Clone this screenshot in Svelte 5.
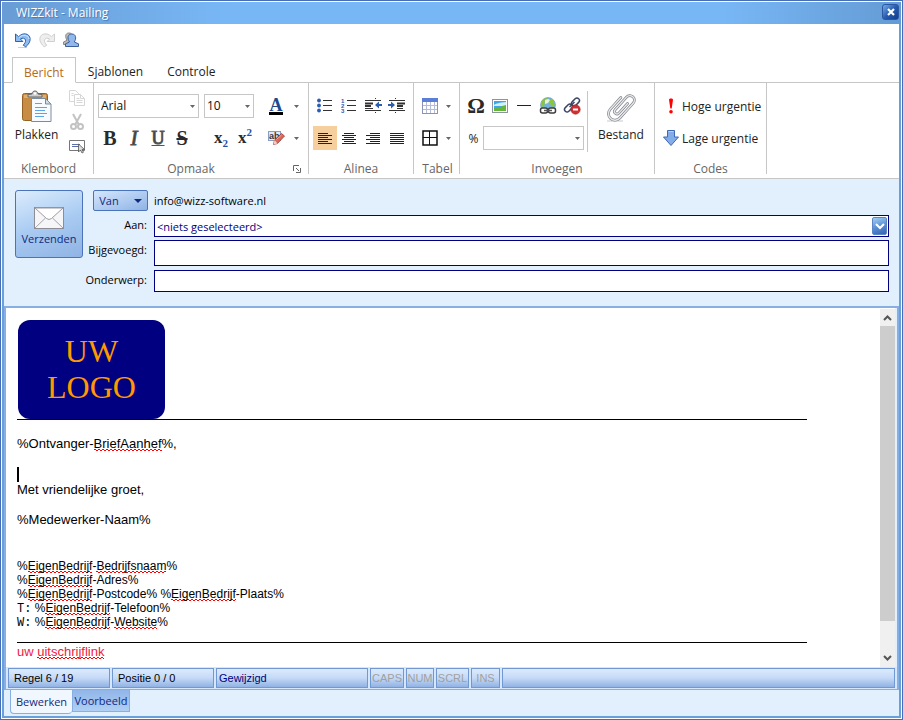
<script lang="ts">
	const fonts = ['Arial', 'Courier New', 'Tahoma', 'Times New Roman'];
	const sizes = [8, 9, 10, 11, 12, 14];
	const alignments = ['left', 'center', 'right', 'justify'] as const;
	const barWidths = [14, 10, 14, 10, 14, 10, 14];

	let font = $state('Arial');
	let size = $state(10);
	let align = $state('left');
	let cc = $state('');
	let subject = $state('');

	function barX(kind: string, width: number) {
		if (kind === 'center') return 8 - width / 2;
		if (kind === 'right') return 15 - width;
		return 1;
	}
</script>

{#snippet caret()}
	<svg class="caret" width="5" height="3" viewBox="0 0 5 3" aria-hidden="true">
		<path d="M0 0h5L2.5 3z" fill="#666" />
	</svg>
{/snippet}

<div class="window">
	<header class="titlebar">
		<h1>WIZZkit - Mailing</h1>
		<button class="close" aria-label="Sluiten">
			<svg width="8" height="8" viewBox="0 0 8 8"><path d="M1 1l6 6M7 1L1 7" stroke="#fff" stroke-width="2.2" /></svg>
		</button>
	</header>

	<div class="quick">
		<button class="tool" aria-label="Ongedaan maken">
			<svg width="18" height="18" viewBox="0 0 18 18">
				<path d="M4 16.5h9" stroke="#bbb" opacity=".7" />
				<path d="M1.5 3v7.5h7.4L6.4 8c2-1.4 4.6-1 5.1 1 .4 1.7-.7 3.5-2.3 5.2l2.6 1.6c3-2.5 4.7-5.5 4.3-8.5C15.5 2.5 9 1 4.6 5.7z" fill="#8fbdf2" stroke="#2c62ae" stroke-linejoin="round" />
				<path d="M5 6.7c4-4.3 9.8-2.4 10 1.3" fill="none" stroke="#d5e8fc" />
			</svg>
		</button>
		<button class="tool" aria-label="Opnieuw" disabled>
			<svg width="18" height="18" viewBox="0 0 18 18">
				<path d="M16.5 3v7.5H9.1L11.6 8c-2-1.4-4.6-1-5.1 1-.4 1.7.7 3.5 2.3 5.2l-2.6 1.6c-3-2.5-4.7-5.5-4.3-8.5C2.5 2.5 9 1 13.4 5.7z" fill="#eee" stroke="#d0d0d0" stroke-linejoin="round" />
			</svg>
		</button>
		<button class="tool" aria-label="Contacten">
			<svg width="18" height="18" viewBox="0 0 18 18">
				<path d="M1.5 13.5V11L5 9.3C3 6 3 2 7 2s4 4 2.5 7l1 4.5z" fill="#bbb" stroke="#888" />
				<path d="M3.5 15.5v-2.7l4-1.8C5 7.5 5.5 3 9.8 3s4.8 4.5 2.5 8l4.2 1.8v2.7z" fill="#91b8ec" stroke="#3e5f98" stroke-linejoin="round" />
			</svg>
		</button>
	</div>

	<nav class="tabs" aria-label="Lint">
		<button class="tab active">Bericht</button>
		<button class="tab">Sjablonen</button>
		<button class="tab">Controle</button>
	</nav>

	<div class="ribbon">
		<section class="group clipboard">
			<div class="group-body">
				<button class="big">
					<svg width="32" height="34" viewBox="0 0 32 34">
						<rect x="1.5" y="3.5" width="25" height="27" rx="2" fill="#c88d45" stroke="#966126" />
						<path d="M3 5h22v3H3z" fill="#dfad6d" />
						<path d="M7 7V4.5l4-.5c0-4 6-4 6 0l4 .5V7z" fill="#ccc" stroke="#666" />
						<circle cx="14" cy="3.5" r="1.2" fill="#fff" />
						<path d="M10.5 8.5h14l5.5 5.5v17.5H10.5z" fill="#f7fbff" stroke="#7c8b9c" />
						<path d="M24.5 8.5V14H30z" fill="#cfdbe7" stroke="#7c8b9c" />
						<path d="M14 13.5h7M14 17.5h12M14 20.5h10M14 23.5h12M14 26.5h9" stroke="#5ba5e6" />
					</svg>
					Plakken
				</button>
				<div class="stack">
					<button class="tool" aria-label="Kopiëren" disabled>
						<svg width="18" height="18" viewBox="0 0 18 18" fill="#fff" stroke="#d6d6d6">
							<path d="M1.5 1.5h6l3 3v8h-9z" />
							<path d="M6.5 5.5h6l4 4v7h-10zM12.5 5.5v4h4M8.5 9.5h3M8.5 11.5h6M8.5 13.5h6M3.5 4.5h2M3.5 6.5h2" />
						</svg>
					</button>
					<button class="tool" aria-label="Knippen" disabled>
						<svg width="18" height="18" viewBox="0 0 18 18" fill="none" stroke="#c3c3c3" stroke-width="2">
							<path d="M5 1l6 11M13 1L7 12" />
							<circle cx="5.5" cy="13.5" r="2.5" />
							<circle cx="12.5" cy="13.5" r="2.5" />
						</svg>
					</button>
					<button class="tool" aria-label="Alles selecteren">
						<svg width="18" height="18" viewBox="0 0 18 18">
							<path d="M1.5 3.5h15v10h-15z" fill="#fff" stroke="#777" />
							<path d="M4 7.5h8M4 9.5h7" stroke="#5b6ea8" />
							<path d="M10.5 7v8l2-2 1.5 3 1.5-.8-1.5-2.7h2.5z" fill="#ddd" stroke="#555" stroke-width=".8" />
						</svg>
					</button>
				</div>
			</div>
			<h2>Klembord</h2>
		</section>

		<section class="group font">
			<div class="group-body">
				<div class="rows">
					<div class="row combos">
						<div class="combo family">
							<select aria-label="Lettertype" bind:value={font}>
								{#each fonts as name (name)}<option>{name}</option>{/each}
							</select>
							{@render caret()}
						</div>
						<div class="combo size">
							<select aria-label="Tekengrootte" bind:value={size}>
								{#each sizes as n (n)}<option value={n}>{n}</option>{/each}
							</select>
							{@render caret()}
						</div>
					</div>
					<div class="row">
						<button class="tool glyph" aria-label="Vet"><b>B</b></button>
						<button class="tool glyph italic" aria-label="Cursief"><i>I</i></button>
						<button class="tool glyph underline" aria-label="Onderstrepen"><u>U</u></button>
						<button class="tool glyph strike" aria-label="Doorhalen"><s>S</s></button>
						<button class="tool glyph script" aria-label="Subscript"><span>x<sub>2</sub></span></button>
						<button class="tool glyph script" aria-label="Superscript"><span>x<sup>2</sup></span></button>
					</div>
				</div>
				<span class="divider"></span>
				<div class="rows">
					<div class="row">
						<button class="tool color" aria-label="Tekstkleur">A</button>
						<button class="drop" aria-label="Meer kleuren">{@render caret()}</button>
					</div>
					<div class="row">
						<button class="tool" aria-label="Markeren">
							<svg width="18" height="18" viewBox="0 0 18 18">
								<rect x="1.5" y="2.5" width="12" height="9" fill="#e3ebf9" stroke="#8b9dc6" />
								<text x="2" y="10" font-family="Liberation Sans, sans-serif" font-size="9" font-weight="bold" fill="#334">ab</text>
								<path d="M7.5 11l7-6.500 3 2.500-7 7.500-4 1z" fill="#d9685a" stroke="#9c3a30" stroke-width=".8" />
								<path d="M7.5 11l3 3.500-4 1z" fill="#f3cfc9" />
								<path d="M9.5 10.5l5-4.5" stroke="#f0a69c" />
							</svg>
						</button>
						<button class="drop" aria-label="Meer markeringen">{@render caret()}</button>
					</div>
				</div>
			</div>
			<footer class="launch">
				<h2>Opmaak</h2>
				<button aria-label="Opmaakvenster">
					<svg width="8" height="8" viewBox="0 0 8 8" fill="none" stroke="#666">
						<path d="M.5 6V.5H6M3 3l3 3M7.5 3v4.5H3" />
					</svg>
				</button>
			</footer>
		</section>

		<section class="group">
			<div class="group-body">
				<div class="rows">
					<div class="row">
						<button class="tool" aria-label="Opsomming">
							<svg width="16" height="16" viewBox="0 0 16 16">
								<path d="M6 2.5h9M6 7.5h9M6 12.5h9" stroke="#333" />
								<g fill="#2b5caf"><circle cx="2" cy="2.5" r="1.9" /><circle cx="2" cy="7.5" r="1.9" /><circle cx="2" cy="12.5" r="1.9" /></g>
							</svg>
						</button>
						<button class="tool" aria-label="Nummering">
							<svg width="16" height="16" viewBox="0 0 16 16">
								<path d="M6 2.5h9M6 7.5h9M6 12.5h9" stroke="#333" />
								<g font-family="Liberation Sans, sans-serif" font-size="6" font-weight="bold" fill="#2b5caf">
									<text x="0" y="5">1</text><text x="0" y="10">2</text><text x="0" y="15">3</text>
								</g>
							</svg>
						</button>
						<button class="tool" aria-label="Inspringing verkleinen">
							<svg width="18" height="16" viewBox="0 0 18 16">
								<path d="M1 2.5h16M1 10.5h8M1 12.5h16" stroke="#333" />
								<path d="M1 5.5h8M1 8h6" stroke="#333" stroke-width="2" />
								<path d="M11.5 0v3M11.5 12v4" stroke="#333" stroke-dasharray="1 1" />
								<path d="M11 7l4-3.5V6h3v2h-3v2.5z" fill="#2b5caf" />
							</svg>
						</button>
						<button class="tool" aria-label="Inspringing vergroten">
							<svg width="18" height="16" viewBox="0 0 18 16">
								<path d="M1 2.5h16M9 10.5h6M1 12.5h16" stroke="#333" />
								<path d="M9 5.5h8M9 8h6" stroke="#333" stroke-width="2" />
								<path d="M7.5 0v3M7.5 12v4" stroke="#333" stroke-dasharray="1 1" />
								<path d="M7 7L3 3.5V6H0v2h3v2.5z" fill="#2b5caf" />
							</svg>
						</button>
					</div>
					<div class="row">
						{#each alignments as kind (kind)}
							<button class="tool" class:pressed={align === kind} aria-label="Uitlijnen: {kind}" onclick={() => (align = kind)}>
								<svg width="16" height="12" viewBox="0 0 16 12" shape-rendering="crispEdges">
									{#each barWidths as w, i (i)}
										{@const width = kind === 'justify' ? 14 : w}
										<rect x={barX(kind, width)} y={i * 2 - 1} {width} height="1" fill="#222" />
									{/each}
								</svg>
							</button>
						{/each}
					</div>
				</div>
			</div>
			<h2>Alinea</h2>
		</section>

		<section class="group table">
			<div class="group-body">
				<div class="rows">
					<div class="row">
						<button class="tool" aria-label="Tabel invoegen">
							<svg width="16" height="16" viewBox="0 0 16 16">
								<rect x=".5" y=".5" width="15" height="15" fill="#fff" stroke="#8b93b7" />
								<path d="M0 0h16v4H0z" fill="#5b7fd6" />
								<path d="M1 7.5h14M1 11.5h14M4.5 4v11M8.5 4v11M12.5 4v11" stroke="#b4bcda" />
							</svg>
						</button>
						<button class="drop" aria-label="Tabelopties">{@render caret()}</button>
					</div>
					<div class="row">
						<button class="tool" aria-label="Randen">
							<svg width="16" height="16" viewBox="0 0 16 16" fill="none" stroke="#111">
								<path d="M1 1h14v14H1z" stroke-width="1.5" /><path d="M7.5 1v14M1 7.5h14" />
							</svg>
						</button>
						<button class="drop" aria-label="Randopties">{@render caret()}</button>
					</div>
				</div>
			</div>
			<h2>Tabel</h2>
		</section>

		<section class="group insert">
			<div class="group-body">
				<div class="rows">
					<div class="row">
						<button class="tool omega" aria-label="Symbool">Ω</button>
						<button class="tool" aria-label="Afbeelding">
							<svg width="16" height="14" viewBox="0 0 16 14">
								<rect x=".5" y=".5" width="15" height="13" fill="#fff" stroke="#8a94a4" />
								<path d="M2 2h12v10H2z" fill="#3fa6e8" />
								<path d="M2 6c3-2 5-2 12-3v4H2z" fill="#d3effb" />
								<path d="M2 9c4 1 7-2 12-3v6H2z" fill="#64b53a" />
							</svg>
						</button>
						<button class="tool" aria-label="Horizontale lijn">
							<svg width="16" height="16" viewBox="0 0 16 16"><path d="M1 7.5h14" stroke="#222" /></svg>
						</button>
						<button class="tool" aria-label="Hyperlink">
							<svg width="18" height="18" viewBox="0 0 18 18">
								<circle cx="9" cy="8" r="7.5" fill="#75b3df" stroke="#6d94ae" stroke-width=".6" />
								<path d="M2 5C4 1.5 7 .7 8 1L7 4 5 6l1 3-4 1zM10 2l4 1 2 5-2 2-3-3-2-3z" fill="#8cc63c" />
								<path d="M6 3l3-1 2 1-2 3-3 1z" fill="#eaf4d5" />
								<g fill="#fff" stroke="#3c3c3c" stroke-width="1.5">
									<rect x="1.5" y="11" width="7" height="5" rx="2" /><rect x="9.5" y="11" width="7" height="5" rx="2" />
								</g>
								<path d="M5 13.5h8" stroke="#555" stroke-width="1.5" />
							</svg>
						</button>
						<button class="tool" aria-label="Hyperlink verwijderen">
							<svg width="18" height="18" viewBox="0 0 18 18">
								<g fill="none" stroke="#3b4664" stroke-width="1.5">
									<rect x="8" y="2.5" width="9" height="5" rx="2.5" transform="rotate(-45 12.5 5)" />
									<rect x="1" y="8.5" width="9" height="5" rx="2.5" transform="rotate(-45 5.5 11)" />
									<path d="M6.5 10l5-5" />
								</g>
								<circle cx="12.5" cy="12.5" r="4.7" fill="#cf3030" stroke="#a51c1c" stroke-width=".6" />
								<path d="M10 12.5h5" stroke="#fff" stroke-width="2" />
							</svg>
						</button>
					</div>
					<div class="row">
						<label class="percent" for="veld">%</label>
						<div class="combo field">
							<select id="veld"><option></option></select>
							{@render caret()}
						</div>
					</div>
				</div>
				<span class="divider"></span>
				<button class="big file">
					<svg width="34" height="34" viewBox="0 0 34 34" fill="none">
						<path d="M3 31h16" stroke="#e4e4e4" stroke-width="2" />
						<g transform="translate(17 17) rotate(42)" stroke-linecap="round">
							<path d="M2.5-7V6a2.5 2.5 0 0 1-5 0V-11a4.5 4.5 0 0 1 9 0V9a6.5 6.5 0 0 1-13 0V-7" stroke="#7f8389" stroke-width="2.8" />
							<path d="M2.5-7V6a2.5 2.5 0 0 1-5 0V-11a4.5 4.5 0 0 1 9 0V9a6.5 6.5 0 0 1-13 0V-7" stroke="#e6e8eb" stroke-width="1.4" />
						</g>
					</svg>
					Bestand
				</button>
			</div>
			<h2>Invoegen</h2>
		</section>

		<section class="group codes">
			<div class="group-body">
				<div class="rows">
					<button class="priority">
						<svg width="16" height="16" viewBox="0 0 16 16" fill="#f00">
							<path d="M6 1.5C6 0 10 0 10 1.5l-1.300 9H7.3z" /><circle cx="8" cy="13.7" r="1.8" />
						</svg>
						Hoge urgentie
					</button>
					<button class="priority">
						<svg width="16" height="16" viewBox="0 0 16 16">
							<path d="M4.5.5h7V7h4L8 15.5.5 7h4z" fill="#83ace8" stroke="#3d69b5" stroke-linejoin="round" />
							<path d="M5.5 1.5h5" stroke="#b9d2f5" />
						</svg>
						Lage urgentie
					</button>
				</div>
			</div>
			<h2>Codes</h2>
		</section>
	</div>

	<form class="address" onsubmit={(e) => e.preventDefault()}>
		<button class="send">
			<svg width="30" height="22" viewBox="0 0 30 22">
				<rect x=".5" y=".5" width="29" height="21" fill="#f6f6f8" stroke="#8d8d96" />
				<path d="M1 21l10.5-10M29 21L18.5 11" stroke="#a4a4ac" />
				<path d="M1 1l11.5 10.5q2.5 2 5 0L29 1z" fill="#fff" stroke="#9b9ba3" />
			</svg>
			Verzenden
		</button>
		<div class="fields">
			<button type="button" class="from">
				Van
				<svg width="8" height="4" viewBox="0 0 8 4"><path d="M0 0h8L4 4z" fill="#102a80" /></svg>
			</button>
			<span class="sender">info@wizz-software.nl</span>

			<label for="aan">Aan:</label>
			<div class="recipient">
				<select id="aan"><option>&lt;niets geselecteerd&gt;</option></select>
				<span class="pick" aria-hidden="true">
					<svg width="10" height="7" viewBox="0 0 10 7"><path d="M1 1l4 4 4-4" fill="none" stroke="#fff" stroke-width="2" /></svg>
				</span>
			</div>

			<label for="cc">Bijgevoegd:</label>
			<input id="cc" class="tall" bind:value={cc} />

			<label for="subject">Onderwerp:</label>
			<input id="subject" bind:value={subject} />
		</div>
	</form>

	<main class="editor">
		<div class="page">
			<div class="logo">UW<br />LOGO</div>
			<hr />
			<div class="letter">
				<p>%Ontvanger-<span class="typo">BriefAanhef</span>%,</p>
				<p class="blank"></p>
				<p><span class="cursor"></span></p>
				<p>Met vriendelijke groet,</p>
				<p></p>
				<p>%Medewerker-Naam%</p>
				<p></p>
				<p></p>
			</div>
			<div class="company">
				<p>%<span class="typo">EigenBedrijf</span>-<span class="typo">Bedrijfsnaam</span>%</p>
				<p>%<span class="typo">EigenBedrijf</span>-Adres%</p>
				<p>%<span class="typo">EigenBedrijf</span>-Postcode% %<span class="typo">EigenBedrijf</span>-Plaats%</p>
				<p><code>T:</code> %<span class="typo">EigenBedrijf</span>-Telefoon%</p>
				<p><code>W:</code> %<span class="typo">EigenBedrijf</span>-<span class="typo">Website</span>%</p>
			</div>
			<hr />
			<a class="unsubscribe" href="#uitschrijven">uw <span class="typo">uitschrijflink</span></a>
		</div>
		<div class="scrollbar" aria-hidden="true">
			<svg width="9" height="6" viewBox="0 0 9 6"><path d="M1 5l3.5-3.5L8 5" fill="none" stroke="#555" stroke-width="2" /></svg>
			<span class="thumb"></span>
			<svg width="9" height="6" viewBox="0 0 9 6"><path d="M1 1l3.5 3.5L8 1" fill="none" stroke="#555" stroke-width="2" /></svg>
		</div>
	</main>

	<div class="status" role="status">
		<span class="w-line">Regel 6 / 19</span>
		<span class="w-line">Positie 0 / 0</span>
		<span class="w-state">Gewijzigd</span>
		<span class="key w-caps">CAPS</span>
		<span class="key w-num">NUM</span>
		<span class="key w-scrl">SCRL</span>
		<span class="key w-ins">INS</span>
		<span class="rest"></span>
	</div>

	<nav class="views" aria-label="Weergave">
		<button class="view current">Bewerken</button>
		<button class="view">Voorbeeld</button>
	</nav>
</div>

<style>
	:global(body) {
		margin: 0;
	}

	.window,
	.window * {
		box-sizing: border-box;
	}

	.window {
		display: flex;
		flex-direction: column;
		min-height: 100vh;
		padding: 1px;
		border: 1px solid #466eb6;
		background: #fff;
		font: 12px 'Open Sans', 'Noto Sans', sans-serif;
		color: #222;
	}

	button {
		display: flex;
		align-items: center;
		justify-content: center;
		padding: 0;
		border: 0;
		background: none;
		font: inherit;
		color: inherit;
	}

	h1,
	h2,
	p {
		margin: 0;
		font-size: 12px;
		font-weight: 400;
	}

	.titlebar {
		display: flex;
		align-items: center;
		justify-content: space-between;
		height: 22px;
		padding: 0 2px 2px 14px;
		background: linear-gradient(90deg, #689cd4, #78b7f6 25%, #78b7f6 80%, #649bd4);
	}

	.titlebar h1 {
		color: #fff;
		text-shadow: 1px 1px 1px #4475b4;
	}

	.close {
		width: 17px;
		height: 16px;
		border: 1px solid #2a56a4;
		border-radius: 3px;
		background: linear-gradient(135deg, #74aee8, #275cae 50%, #123c8e);
	}

	.quick,
	.tabs,
	.ribbon,
	.address,
	.editor,
	.status,
	.views {
		border: solid #699fdb;
		border-width: 0 2px;
	}

	.quick {
		display: flex;
		height: 33px;
		padding: 4px 7px;
	}

	.tool {
		width: 24px;
		height: 24px;
	}

	.tabs {
		display: flex;
		height: 26px;
	}

	.tabs::before,
	.tabs::after {
		width: 8px;
		border-bottom: 1px solid #c6c6c6;
		content: '';
	}

	.tabs::after {
		flex: 1;
	}

	.tab {
		padding: 4px 12px 0;
		border-bottom: 1px solid #c6c6c6;
	}

	.tab.active {
		padding: 4px 11px 0;
		border: 1px solid #c6c6c6;
		border-bottom-color: #fff;
		color: #b86a14;
	}

	.ribbon {
		display: flex;
		height: 96px;
		box-shadow: inset 0 -1px #c6c6c6;
	}

	/* the group separator stops short of the caption's last line */
	.group {
		display: flex;
		flex-direction: column;
		justify-content: space-between;
		height: 94px;
		padding: 0 4px;
		border: solid transparent;
		border-width: 0 1px 0 0;
		border-image: linear-gradient(#c6c6c6 90px, transparent 90px) 1;
	}

	.group h2 {
		line-height: 16px;
		text-align: center;
		color: #666;
	}

	.group-body {
		display: flex;
		height: 74px;
	}

	.clipboard {
		width: 90px;
	}

	.font {
		width: 215px;
	}

	.table {
		width: 46px;
		padding: 0 2px 0 4px;
	}

	.insert {
		width: 195px;
	}

	.codes {
		width: 112px;
	}

	.big {
		flex-direction: column;
		justify-content: flex-start;
		gap: 3px;
		width: 57px;
		padding-top: 7px;
		line-height: 16px;
	}

	.stack {
		padding-top: 3px;
	}

	.rows {
		display: flex;
		flex-direction: column;
		gap: 8px;
		padding-top: 11px;
	}

	.row {
		display: flex;
		align-items: center;
		height: 24px;
	}

	.combos {
		gap: 5px;
	}

	.divider {
		width: 1px;
		height: 61px;
		margin: 8px 4px 0 3px;
		background: #c6c6c6;
	}

	.combo,
	.recipient {
		display: grid;
		align-items: center;
	}

	.combo > *,
	.recipient > * {
		grid-area: 1 / 1;
	}

	.combo :global(.caret) {
		justify-self: end;
		margin-right: 4px;
		pointer-events: none;
	}

	select {
		width: 100%;
		height: 24px;
		padding: 0 2px 2px;
		border: 1px solid #c6c6c6;
		border-radius: 0;
		appearance: none;
		background: #fff;
		font: inherit;
		color: #111;
	}

	.family,
	.field {
		width: 101px;
	}

	.size {
		width: 50px;
	}

	.percent {
		width: 19px;
		text-align: center;
	}

	.glyph,
	.omega {
		font: 700 20px 'Liberation Serif', serif;
		color: #2a2a2a;
	}

	.italic,
	.underline {
		font-weight: 400;
		color: #333;
		-webkit-text-stroke: 1px #555;
	}

	.underline {
		font-size: 18px;
	}

	.script {
		font-size: 17px;
		line-height: 20px;
	}

	.script sub,
	.script sup {
		font-size: 11px;
		line-height: 1px;
		color: #2450ac;
	}

	.strike {
		margin-right: 15px;
	}

	.omega {
		font-size: 22px;
	}

	.color {
		width: 14px;
		height: 18px;
		margin: 0 5px;
		border-bottom: 3px solid #000;
		font: 700 18px/16px 'Liberation Serif', serif;
		color: #204a8c;
	}

	.drop {
		width: 13px;
		height: 24px;
	}

	.font .drop {
		width: 16px;
	}

	.launch {
		display: grid;
		align-items: center;
	}

	.launch > * {
		grid-area: 1 / 1;
	}

	.launch h2 {
		padding-right: 20px;
	}

	.launch button {
		justify-self: end;
		margin-right: 3px;
	}

	.pressed {
		background: #f5cf9d;
	}

	.file {
		width: 59px;
	}

	.priority {
		justify-content: flex-start;
		gap: 3px;
		height: 24px;
		padding-left: 4px;
		white-space: nowrap;
	}

	.address {
		display: flex;
		gap: 5px;
		padding: 11px 10px 14px 11px;
		background: #e2f0fe;
		font-size: 11px;
	}

	.send {
		flex: none;
		flex-direction: column;
		gap: 2px;
		width: 68px;
		height: 68px;
		padding-top: 4px;
		border: 1px solid #4b73ba;
		border-radius: 3px;
		background: linear-gradient(160deg, #dcecfd, #a9cbf2 50%, #8fb3e4);
		color: #102a80;
	}

	.fields {
		display: grid;
		flex: 1;
		grid-template-columns: 60px 1fr;
		grid-template-rows: 22px 22px 27px 22px;
		gap: 3px 6px;
	}

	.fields label {
		justify-self: end;
		padding-right: 1px;
		line-height: 20px;
		white-space: nowrap;
		color: #000;
	}

	.from {
		justify-self: end;
		gap: 15px;
		width: 55px;
		height: 21px;
		border: 1px solid #4b73ba;
		border-radius: 2px;
		background: linear-gradient(160deg, #d5e7fc, #8fb3e6);
		color: #102a80;
	}

	.sender {
		line-height: 22px;
		color: #000;
	}

	.fields input,
	.recipient select {
		width: 100%;
		height: 22px;
		padding: 0 2px;
		border: 1px solid #000080;
		background: #fff;
		font: inherit;
		color: #000080;
	}

	.fields .tall {
		height: 26px;
	}

	.pick {
		display: flex;
		align-items: center;
		justify-content: center;
		justify-self: end;
		width: 15px;
		height: 18px;
		margin-right: 2px;
		border: 1px solid #5b86c6;
		border-radius: 2px;
		background: linear-gradient(160deg, #a4d0f6, #5d92d6 50%, #3560b4);
		pointer-events: none;
	}

	.editor {
		display: flex;
		flex: 1;
		padding: 2px 2px 0 0;
		box-shadow: inset 2px 2px #87afe3, inset -2px 0 #87afe3, inset -4px 0 #e2f0fe;
	}

	.page {
		flex: 1;
		padding: 12px 11px 0 13px;
		font: 13px 'Liberation Sans', Arial, sans-serif;
		color: #000;
	}

	.logo {
		width: 147px;
		height: 99px;
		margin-left: 1px;
		padding-top: 13px;
		border-radius: 12px;
		background: #000080;
		font: 32px/36px 'Liberation Serif', serif;
		text-align: center;
		color: #ff9900;
	}

	hr {
		max-width: 790px;
		height: 1px;
		margin: 0;
		border: 0;
		background: #000;
	}

	.letter {
		padding-top: 16px;
	}

	.letter p {
		height: 15px;
		font-size: 13px;
		line-height: 15px;
	}

	.letter .blank {
		height: 16px;
	}

	.company {
		padding: 2px 0 13px;
	}

	.company p {
		font-size: 12px;
		line-height: 14px;
	}

	code {
		font: 12px/12px 'Liberation Mono', monospace;
	}

	/* two offset rows of dashes read as the spelling squiggle */
	.typo {
		background:
			repeating-linear-gradient(90deg, #f00 0 2px, transparent 2px 4px) 0 calc(100% - 1px) / 100% 1px no-repeat,
			repeating-linear-gradient(90deg, transparent 0 2px, #f00 2px 4px) 0 100% / 100% 1px no-repeat;
	}

	.cursor {
		display: block;
		width: 2px;
		height: 15px;
		background: #000;
	}

	.unsubscribe {
		display: block;
		line-height: 18px;
		text-decoration: none;
		color: #f02040;
	}

	.scrollbar {
		display: flex;
		flex-direction: column;
		align-items: center;
		width: 15px;
		margin: 1px 2px 0 0;
		padding: 6px 0;
		background: #f0f0f0;
	}

	.thumb {
		flex: 1;
		width: 15px;
		margin: 5px 0 34px;
		background: #cdcdcd;
	}

	.status {
		display: flex;
		gap: 2px;
		height: 23px;
		padding: 1px 4px 2px;
		background: #d7e7fb;
		box-shadow: inset 2px -1px #87afe3, inset -2px 0 #87afe3;
		font: 11px 'Liberation Sans', Arial, sans-serif;
		color: #000;
	}

	.status span {
		flex: none;
		padding-left: 5px;
		border: 1px solid #7099d4;
		background: linear-gradient(#dceafd, #c5daf7 50%, #90b2e4);
		line-height: 18px;
	}

	.status .w-line {
		width: 102px;
	}

	.status .w-state {
		width: 152px;
		padding-left: 2px;
		color: #000080;
	}

	.status .key {
		padding: 0;
		text-align: center;
		color: #a0a0a0;
	}

	.status .w-caps {
		width: 34px;
	}

	.status .w-num {
		width: 28px;
	}

	.status .w-scrl {
		width: 33px;
	}

	.status .w-ins {
		width: 29px;
	}

	.status .rest {
		flex: 1;
	}

	.views {
		display: flex;
		align-items: flex-start;
		height: 28px;
		padding-left: 6px;
		border-bottom-width: 2px;
		background: #e2f0fe;
		font-size: 11px;
		color: #102a80;
	}

	.view {
		width: 58px;
		height: 22px;
		border: 1px solid #87afe3;
		border-top: 0;
		background: linear-gradient(#90b5e8, #b0cff4);
	}

	.view.current {
		width: 62px;
		height: 24px;
		border-right: 0;
		border-radius: 0 0 4px 4px;
		background: #f0f7ff;
	}
</style>
